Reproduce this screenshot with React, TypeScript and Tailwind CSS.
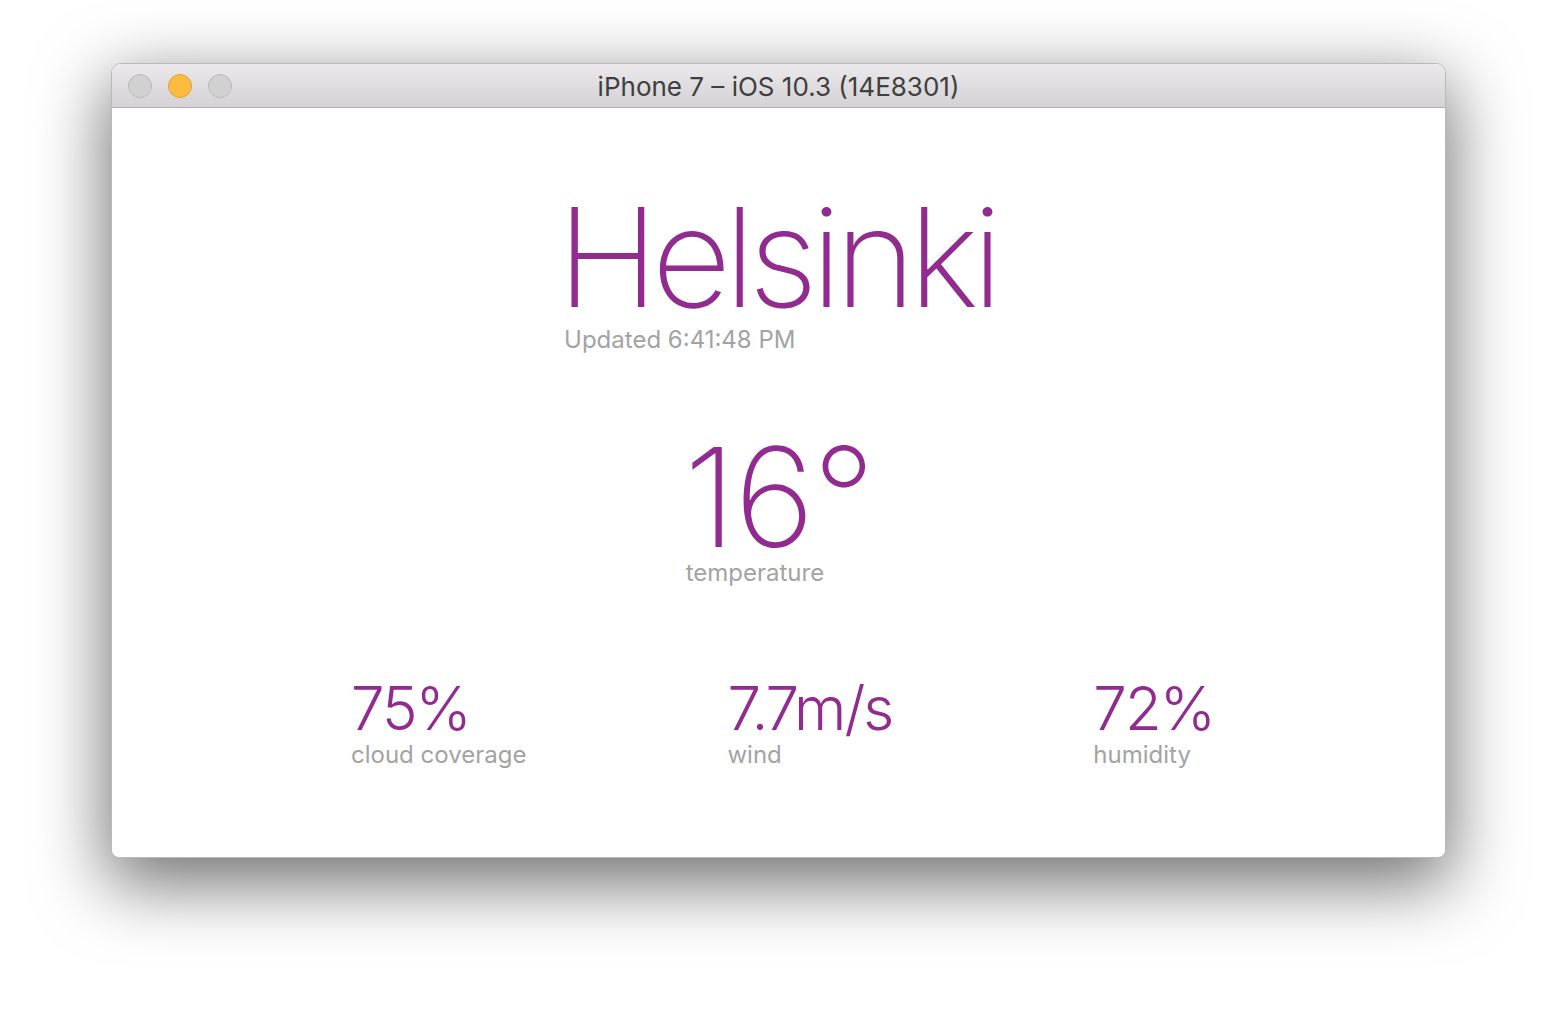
import React from "react";

const font = { fontFamily: "Inter, 'Noto Sans', sans-serif" };

function Stat({ value, label }: { value: string; label: string }) {
  return (
    <div className="flex flex-col items-start">
      <div className="text-[60px] leading-[60px] font-light text-[#912b8f] tracking-[-2px]">{value}</div>
      <div className="mt-[5px] text-[24px] leading-[24px] text-[#a3a3a3]">{label}</div>
    </div>
  );
}

export default function App() {
  return (
    <div className="w-[1558px] h-[1018px] bg-white overflow-hidden pt-[63px] pl-[111px]" style={font}>
      <div className="w-[1335px] h-[795px] rounded-t-[10px] rounded-b-[8px] overflow-hidden bg-white border border-[#b9b9b9] shadow-[0_22px_70px_4px_rgba(0,0,0,0.56)] flex flex-col">
        <div className="relative h-[44px] shrink-0 bg-gradient-to-b from-[#ebe9eb] to-[#d4d2d4] border-b border-[#b3b1b3] flex items-center justify-center">
          <div className="absolute left-[16px] top-[10px] flex gap-[16px]">
            <span className="w-[24px] h-[24px] rounded-full bg-[#d1d1d1] border border-[#b9b9b9]" />
            <span className="w-[24px] h-[24px] rounded-full bg-[#fdbc40] border border-[#dea236]" />
            <span className="w-[24px] h-[24px] rounded-full bg-[#d1d1d1] border border-[#b9b9b9]" />
          </div>
          <div className="text-[26px] leading-none text-[#3f3f3f] mt-[2px]">iPhone 7 – iOS 10.3 (14E8301)</div>
        </div>
        <div className="flex-1 flex flex-col items-center pt-[80px]">
          <div className="flex flex-col items-start">
            <div className="text-[138px] leading-[138px] font-[150] text-[#912b8f] tracking-[-7px] -ml-[4px]">Helsinki</div>
            <div className="text-[24px] leading-[24px] text-[#a3a3a3] ml-[3px] mt-[2px]">Updated 6:41:48 PM</div>
          </div>
          <div className="flex flex-col items-start mt-[76px]">
            <div className="text-[138px] leading-[138px] font-[150] text-[#912b8f] tracking-[-2px]">16°</div>
            <div className="-mt-[5px] ml-[2px] text-[24px] leading-[24px] text-[#a3a3a3]">temperature</div>
          </div>
          <div className="flex justify-center gap-[201px] mt-[93px] ml-[8px]">
            <Stat value="75%" label="cloud coverage" />
            <Stat value="7.7m/s" label="wind" />
            <Stat value="72%" label="humidity" />
          </div>
        </div>
      </div>
    </div>
  );
}
